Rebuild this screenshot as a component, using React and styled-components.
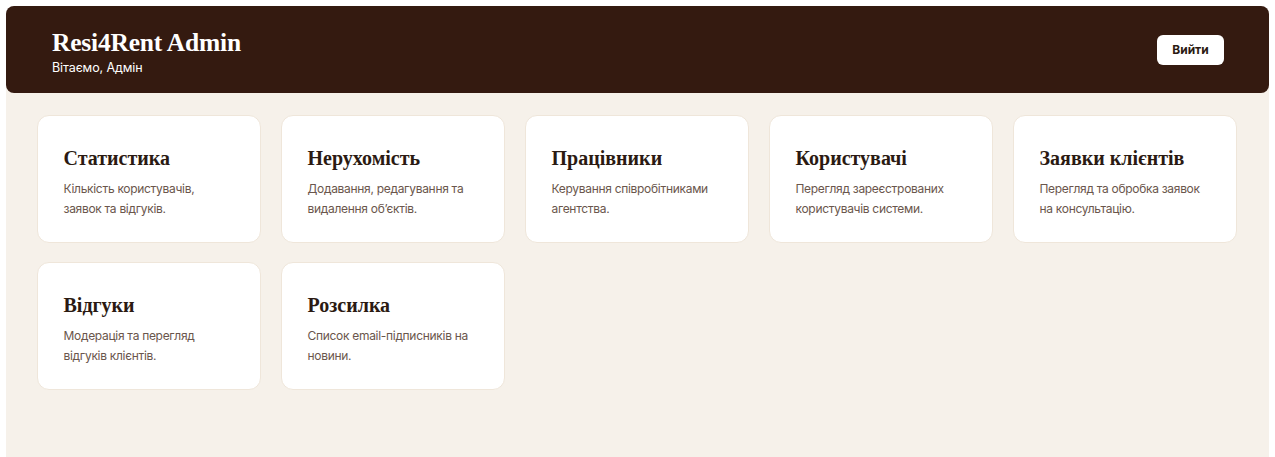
import React from 'react';
import styled, { createGlobalStyle } from 'styled-components';

const GlobalStyle = createGlobalStyle`
  html, body {
    margin: 0;
    background: #ffffff;
  }
  body {
    padding: 6px 6px 0 6px;
    font-family: Inter, "Noto Sans", sans-serif;
  }
`;

const Shell = styled.div`
  min-height: 451px;
  background: #f6f1ea;
  border-radius: 8px 8px 0 0;
`;

const Header = styled.header`
  display: flex;
  align-items: center;
  justify-content: space-between;
  height: 87px;
  box-sizing: border-box;
  padding: 0 45px 0 46px;
  background: #341a10;
  border-radius: 8px;
  color: #ffffff;
`;

const Brand = styled.div`
  display: flex;
  flex-direction: column;
  gap: 3px;
  margin-top: 6px;
`;

const Title = styled.h1`
  margin: 0;
  font-family: "Liberation Serif", "DejaVu Serif", serif;
  font-weight: 700;
  font-size: 25.5px;
  line-height: 28px;
  letter-spacing: -0.2px;
`;

const Welcome = styled.span`
  font-size: 12.5px;
  line-height: 16px;
  letter-spacing: -0.1px;
`;

const LogoutButton = styled.button`
  width: 67px;
  height: 30px;
  border: none;
  border-radius: 6px;
  background: #ffffff;
  color: #2b1a12;
  font-family: Inter, sans-serif;
  font-weight: 700;
  font-size: 12px;
  cursor: pointer;
`;

const Grid = styled.main`
  display: grid;
  grid-template-columns: repeat(5, 1fr);
  gap: 19px 20px;
  max-width: 1200px;
  margin: 0 auto;
  padding-top: 22px;
  transform: translateX(-1px);
`;

const Card = styled.div`
  height: 128px;
  box-sizing: border-box;
  padding: 29px 26px 0 26px;
  background: #ffffff;
  border: 1px solid #efe6da;
  border-radius: 12px;
`;

const CardTitle = styled.h2`
  margin: 0 0 8px 0;
  font-family: "Liberation Serif", "DejaVu Serif", serif;
  font-weight: 700;
  font-size: 20px;
  line-height: 26px;
  color: #2b1a12;
`;

const CardText = styled.p`
  margin: 0;
  font-size: 12px;
  line-height: 20px;
  letter-spacing: -0.3px;
  color: #6a564c;
`;

const sections = [
  { title: 'Статистика', text: 'Кількість користувачів,\nзаявок та відгуків.' },
  { title: 'Нерухомість', text: 'Додавання, редагування та\nвидалення обʼєктів.' },
  { title: 'Працівники', text: 'Керування співробітниками\nагентства.' },
  { title: 'Користувачі', text: 'Перегляд зареєстрованих\nкористувачів системи.' },
  { title: 'Заявки клієнтів', text: 'Перегляд та обробка заявок\nна консультацію.' },
  { title: 'Відгуки', text: 'Модерація та перегляд\nвідгуків клієнтів.' },
  { title: 'Розсилка', text: 'Список email-підписників на\nновини.' },
];

export default function App() {
  return (
    <>
      <GlobalStyle />
      <Shell>
        <Header>
          <Brand>
            <Title>Resi4Rent Admin</Title>
            <Welcome>Вітаємо, Адмін</Welcome>
          </Brand>
          <LogoutButton>Вийти</LogoutButton>
        </Header>
        <Grid>
          {sections.map((s) => (
            <Card key={s.title}>
              <CardTitle>{s.title}</CardTitle>
              <CardText>
                {s.text.split('\n').map((line, i) => (
                  <React.Fragment key={i}>
                    {i > 0 && <br />}
                    {line}
                  </React.Fragment>
                ))}
              </CardText>
            </Card>
          ))}
        </Grid>
      </Shell>
    </>
  );
}
